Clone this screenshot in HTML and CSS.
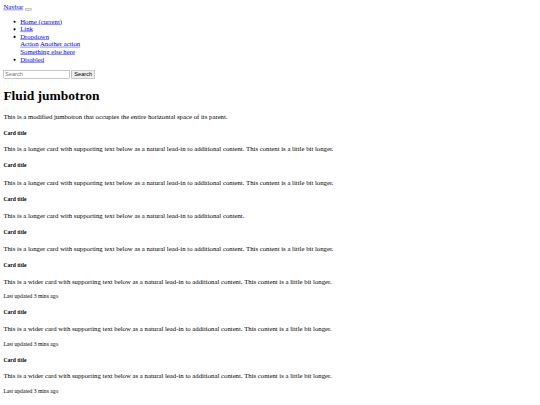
FILE: index.html
```
<!DOCTYPE html>
<html>
<head>
<meta charset="utf-8">
<title>Fluid jumbotron</title>
<link rel="stylesheet" href="styles.css">
</head>
<body>
<div class="page">
<nav class="navbar">
  <a class="brand" href="#">Navbar</a>
  <button class="toggler" type="button"><span class="toggler-icon"></span></button>
  <div class="collapse">
    <ul class="nav-list">
      <li><a href="#">Home <span>(current)</span></a></li>
      <li><a href="#">Link</a></li>
      <li><a href="#">Dropdown</a>
        <div class="dropdown-menu">
          <a href="#">Action</a>
          <a href="#">Another action</a>
          <div class="divider"></div>
          <a href="#">Something else here</a>
        </div>
      </li>
      <li><a href="#">Disabled</a></li>
    </ul>
    <form class="search-form">
      <input class="search-input" type="search" placeholder="Search">
      <button class="search-btn" type="submit">Search</button>
    </form>
  </div>
</nav>
<div class="jumbotron">
  <h1>Fluid jumbotron</h1>
  <p>This is a modified jumbotron that occupies the entire horizontal space of its parent.</p>
</div>
<div class="cards">
  <div class="card">
    <h5>Card title</h5>
    <p>This is a longer card with supporting text below as a natural lead-in to additional content. This content is a little bit longer.</p>
  </div>
  <div class="card">
    <h5>Card title</h5>
    <p>This is a longer card with supporting text below as a natural lead-in to additional content. This content is a little bit longer.</p>
  </div>
  <div class="card">
    <h5>Card title</h5>
    <p>This is a longer card with supporting text below as a natural lead-in to additional content.</p>
  </div>
  <div class="card">
    <h5>Card title</h5>
    <p>This is a longer card with supporting text below as a natural lead-in to additional content. This content is a little bit longer.</p>
  </div>
  <div class="card">
    <h5>Card title</h5>
    <p>This is a wider card with supporting text below as a natural lead-in to additional content. This content is a little bit longer.</p>
    <p><small>Last updated 3 mins ago</small></p>
  </div>
  <div class="card">
    <h5>Card title</h5>
    <p>This is a wider card with supporting text below as a natural lead-in to additional content. This content is a little bit longer.</p>
    <p><small>Last updated 3 mins ago</small></p>
  </div>
  <div class="card">
    <h5>Card title</h5>
    <p>This is a wider card with supporting text below as a natural lead-in to additional content. This content is a little bit longer.</p>
    <p><small>Last updated 3 mins ago</small></p>
  </div>
</div>
</div>
</body>
</html>
```
FILE: styles.css
```
html,
body {
  margin: 0;
  overflow: hidden;
}
.page {
  width: 1280px;
  padding: 8px;
  box-sizing: border-box;
  transform: scale(0.421875);
  transform-origin: 0 0;
  font-family: "Liberation Serif", "Times New Roman", serif;
  font-size: 16px;
  color: #000;
}
a {
  color: #0000ee;
}
.nav-list {
  margin: 16px 0;
  padding-left: 40px;
}
.search-input,
.search-btn {
  font-family: "Liberation Sans", Arial, sans-serif;
  font-size: 13.333px;
}
.search-input {
  box-sizing: border-box;
  width: 157px;
}
.search-btn {
  padding: 1px 5px;
}
.toggler {
  font-size: 13.333px;
}
```
